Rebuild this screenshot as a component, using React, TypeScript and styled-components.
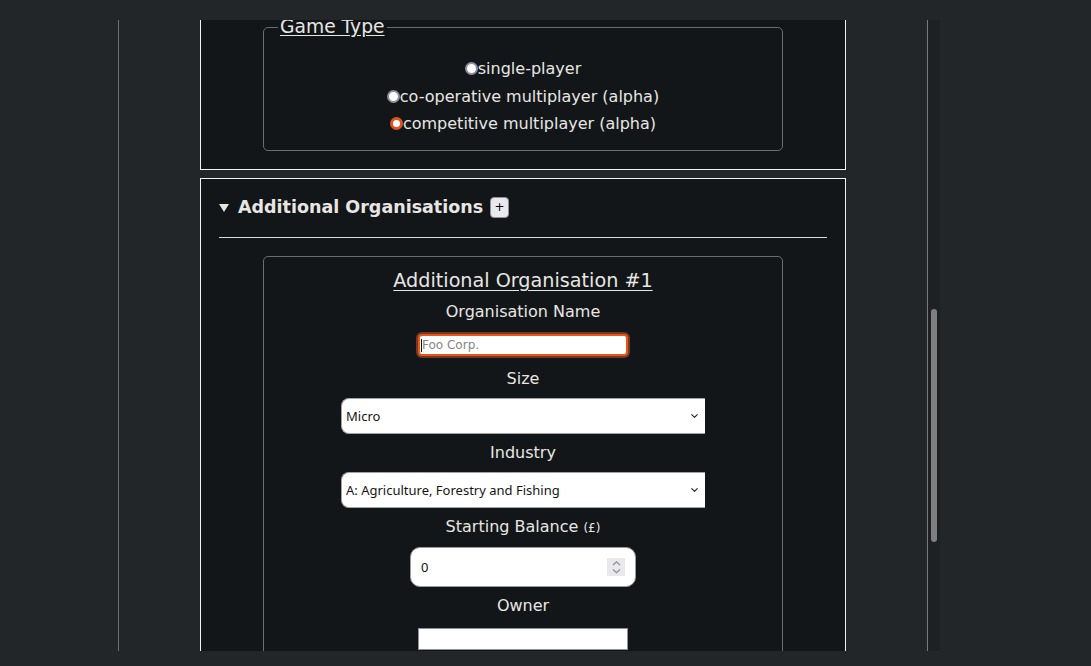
import React, { useLayoutEffect, useRef, useState } from "react";
import styled, { createGlobalStyle, css } from "styled-components";
import { ChevronDown } from "lucide-react";

const GlobalStyle = createGlobalStyle`
  html, body {
    margin: 0;
    padding: 0;
    background: #232629;
    overflow: hidden;
  }
  body {
    font-family: "DejaVu Sans", "Noto Sans", sans-serif;
    color: #e8e6e3;
  }
`;

const Page = styled.div`
  height: 666px;
  box-sizing: border-box;
  padding: 20px 0 15px 118px;
  display: flex;
  align-items: flex-start;
`;

const ScrollArea = styled.div`
  width: 810px;
  height: 631px;
  overflow-y: scroll;
  scrollbar-width: none;
  &::-webkit-scrollbar {
    display: none;
  }
`;

const ScrollTrack = styled.div`
  position: relative;
  width: 12px;
  height: 631px;
  background: #1e2124;
`;

const ScrollThumb = styled.div`
  position: absolute;
  left: 3px;
  width: 6px;
  border-radius: 3px;
  background: #7f7f7f;
`;

const Content = styled.div`
  border-left: 1px solid #6f6f6f;
  border-right: 1px solid #7a7a7a;
  padding: 64px 0 102px;
`;

const Column = styled.div`
  width: 646px;
  margin: 0 auto;
  display: flex;
  flex-direction: column;
  gap: 8px;
`;

const PageTitle = styled.h1`
  margin: 0;
  font-size: 28px;
  line-height: 34px;
  text-align: center;
`;

const Section = styled.details`
  background: #131619;
  border: 1px solid #f2f2f2;
  padding: 17px 18px 18px;
`;

const Summary = styled.summary`
  list-style: none;
  display: flex;
  align-items: center;
  font-size: 17.5px;
  font-weight: bold;
  line-height: 22px;
  cursor: pointer;
  &::-webkit-details-marker {
    display: none;
  }
`;

const Marker = styled.span<{ $open?: boolean }>`
  width: 0;
  height: 0;
  margin: 1px 9px 0 0;
  border-left: 5px solid transparent;
  border-right: 5px solid transparent;
  border-top: 8px solid #e8e6e3;
  ${({ $open }) =>
    !$open &&
    css`
      transform: rotate(-90deg);
    `}
`;

const AddButton = styled.button`
  width: 19px;
  height: 21px;
  margin-left: 7px;
  padding: 0;
  display: flex;
  align-items: center;
  justify-content: center;
  border: 1px solid #8f8f9d;
  border-radius: 4px;
  background: #e9e9ed;
  color: #000;
  font: 12px "DejaVu Sans", sans-serif;
  line-height: 1;
`;

const Divider = styled.hr`
  border: 0;
  border-top: 1px solid #d9d9d9;
  margin: 19px 0 18px;
`;

const Body = styled.div`
  display: flex;
  flex-direction: column;
  align-items: center;
  gap: 18px;
`;

const Card = styled.fieldset`
  width: 520px;
  box-sizing: border-box;
  margin: 0;
  border: 1px solid #6b6e71;
  border-radius: 5px;
  padding: 12px 14px 12px;
  display: flex;
  flex-direction: column;
  align-items: center;
  gap: 9px;
`;

const Legend = styled.legend`
  padding: 0 2px;
  font-size: 18.7px;
  line-height: 22px;
  text-decoration: underline;
  text-underline-offset: 2px;
`;

const CardTitle = styled.div`
  font-size: 19.2px;
  line-height: 24px;
  text-decoration: underline;
  text-underline-offset: 3px;
`;

const Options = styled.div`
  display: flex;
  flex-direction: column;
  gap: 8.5px;
  padding: 9px 0 5px;
  align-self: stretch;
`;

const Option = styled.label`
  display: flex;
  align-items: center;
  justify-content: center;
  font-size: 16px;
  line-height: 19px;
`;

const Radio = styled.input.attrs({ type: "radio" })`
  appearance: none;
  width: 13px;
  height: 13px;
  margin: 0;
  box-sizing: border-box;
  border-radius: 50%;
  border: 2px solid #8f8f9d;
  background: #fff;
  &:checked {
    border: 3.5px solid #e0531f;
  }
`;

const Field = styled.div`
  display: flex;
  flex-direction: column;
  align-items: center;
  gap: 9px;
`;

const FieldLabel = styled.label`
  font-size: 16px;
  line-height: 20px;
`;

const Unit = styled.span`
  font-size: 12px;
`;

const TextInput = styled.input<{ $focused?: boolean }>`
  width: 210px;
  height: 22px;
  box-sizing: border-box;
  margin: 3px 0;
  padding: 0 3px;
  border: 1px solid #8f8f9d;
  background: #fff;
  color: #111;
  font: 12px "DejaVu Sans", sans-serif;
  outline: none;
  &::placeholder {
    color: #858585;
  }
  ${({ $focused }) =>
    $focused &&
    css`
      margin: 3px 0 4px;
      padding: 0 2px;
      border: 2px solid #e4581e;
      border-radius: 4px;
      box-shadow: 0 0 0 2px #7a3820;
      background: linear-gradient(#111, #111) no-repeat 1px 50% / 1px 13px, #fff;
    `}
`;

const SelectWrap = styled.div`
  position: relative;
  width: 364px;
`;

const Select = styled.select`
  appearance: none;
  width: 100%;
  height: 36px;
  box-sizing: border-box;
  padding: 0 24px 0 4px;
  border: 1px solid #a3a3a3;
  border-right: none;
  border-radius: 8px 0 0 8px;
  background: #fff;
  color: #151515;
  font: 13px "Noto Sans", sans-serif;
  outline: none;
`;

const SelectChevron = styled(ChevronDown)`
  position: absolute;
  right: 5px;
  top: 50%;
  transform: translateY(-50%);
  pointer-events: none;
  color: #2a2a2a;
`;

const NumberBox = styled.div`
  width: 226px;
  height: 40px;
  box-sizing: border-box;
  padding: 0 10px;
  display: flex;
  align-items: center;
  border: 1px solid #9b9b9b;
  border-radius: 10px;
  background: #fff;
`;

const NumberInput = styled.input`
  flex: 1;
  min-width: 0;
  padding: 0;
  border: 0;
  outline: none;
  background: transparent;
  color: #111;
  font: 13px "Noto Sans", sans-serif;
  appearance: textfield;
  &::-webkit-inner-spin-button,
  &::-webkit-outer-spin-button {
    appearance: none;
    margin: 0;
  }
`;

const Spinner = styled.span`
  width: 18px;
  height: 18px;
  display: flex;
  background: #e9e9ed;
`;

const SmallButton = styled.button`
  padding: 5px 12px;
  border: 1px solid #8f8f9d;
  border-radius: 4px;
  background: #e9e9ed;
  color: #111;
  font: 13px "DejaVu Sans", sans-serif;
`;

const SubmitRow = styled.div`
  display: flex;
  justify-content: center;
  padding: 10px 0;
`;

const SIZES = ["Micro", "Small", "Medium", "Large"];
const INDUSTRIES = [
  "A: Agriculture, Forestry and Fishing",
  "B: Mining and Quarrying",
  "C: Manufacturing",
  "D: Electricity, Gas, Steam and Air Conditioning Supply",
  "F: Construction",
  "G: Wholesale and Retail Trade",
];
const TURN_LENGTHS = ["1 month", "3 months", "6 months", "1 year"];
const GAME_TYPES = [
  { id: "single", label: "single-player" },
  { id: "coop", label: "co-operative multiplayer (alpha)" },
  { id: "competitive", label: "competitive multiplayer (alpha)" },
];

const SpinIcon = () => (
  <svg width="18" height="18" viewBox="0 0 18 18" fill="none" stroke="#8f8f9d" strokeWidth="1.3">
    <polyline points="6,7 9.5,3.8 13,7" />
    <polyline points="6,11.5 9.5,14.7 13,11.5" />
  </svg>
);

type SelectFieldProps = { id: string; label: string; options: string[] };

const SelectField: React.FC<SelectFieldProps> = ({ id, label, options }) => (
  <Field>
    <FieldLabel htmlFor={id}>{label}</FieldLabel>
    <SelectWrap>
      <Select id={id} defaultValue={options[0]}>
        {options.map((o) => (
          <option key={o}>{o}</option>
        ))}
      </Select>
      <SelectChevron size={11} strokeWidth={2.6} />
    </SelectWrap>
  </Field>
);

type OrgFieldsProps = { prefix: string; focusName?: boolean };

const OrgFields: React.FC<OrgFieldsProps> = ({ prefix, focusName }) => (
  <>
    <Field>
      <FieldLabel htmlFor={`${prefix}-name`}>Organisation Name</FieldLabel>
      <TextInput id={`${prefix}-name`} placeholder="Foo Corp." $focused={focusName} />
    </Field>
    <SelectField id={`${prefix}-size`} label="Size" options={SIZES} />
    <SelectField id={`${prefix}-industry`} label="Industry" options={INDUSTRIES} />
    <Field>
      <FieldLabel htmlFor={`${prefix}-balance`}>
        Starting Balance <Unit>(£)</Unit>
      </FieldLabel>
      <NumberBox>
        <NumberInput id={`${prefix}-balance`} type="number" defaultValue={0} />
        <Spinner>
          <SpinIcon />
        </Spinner>
      </NumberBox>
    </Field>
  </>
);

export default function App() {
  const scrollRef = useRef<HTMLDivElement>(null);
  const orgsRef = useRef<HTMLDetailsElement>(null);
  const [thumb, setThumb] = useState({ top: 0, height: 0 });

  const syncThumb = () => {
    const box = scrollRef.current;
    if (!box) return;
    const track = box.clientHeight;
    setThumb({
      top: (box.scrollTop / box.scrollHeight) * track,
      height: (box.clientHeight / box.scrollHeight) * track,
    });
  };

  // the screenshot is taken part way down the form
  useLayoutEffect(() => {
    const box = scrollRef.current;
    const target = orgsRef.current;
    if (!box || !target) return;
    const offset =
      target.getBoundingClientRect().top - box.getBoundingClientRect().top + box.scrollTop;
    box.scrollTop = offset - 158;
    syncThumb();
  }, []);

  return (
    <>
      <GlobalStyle />
      <Page>
        <ScrollArea ref={scrollRef} onScroll={syncThumb}>
          <Content>
            <Column>
              <PageTitle>New Game</PageTitle>
              <Section open>
                <Summary>
                  <Marker $open />
                  Game Settings
                </Summary>
                <Divider />
                <Body>
                  <Field>
                    <FieldLabel htmlFor="game-name">Game Name</FieldLabel>
                    <TextInput id="game-name" placeholder="My Game" />
                  </Field>
                  <Field>
                    <FieldLabel htmlFor="player-name">Your Name</FieldLabel>
                    <TextInput id="player-name" placeholder="Jane Doe" />
                  </Field>
                  <SelectField id="turn-length" label="Turn Length" options={TURN_LENGTHS} />
                  <Card>
                    <CardTitle>Your Organisation</CardTitle>
                    <OrgFields prefix="main" />
                  </Card>
                  <Card>
                    <Legend>Game Type</Legend>
                    <Options>
                      {GAME_TYPES.map((t) => (
                        <Option key={t.id}>
                          <Radio
                            name="game-type"
                            value={t.id}
                            defaultChecked={t.id === "competitive"}
                          />
                          {t.label}
                        </Option>
                      ))}
                    </Options>
                  </Card>
                </Body>
              </Section>
              <Section open ref={orgsRef}>
                <Summary>
                  <Marker $open />
                  Additional Organisations
                  <AddButton type="button">+</AddButton>
                </Summary>
                <Divider />
                <Body>
                  <Card>
                    <CardTitle>Additional Organisation #1</CardTitle>
                    <OrgFields prefix="org1" focusName />
                    <Field>
                      <FieldLabel htmlFor="org1-owner">Owner</FieldLabel>
                      <TextInput id="org1-owner" />
                    </Field>
                    <SmallButton type="button">Remove</SmallButton>
                  </Card>
                </Body>
              </Section>
              <Section>
                <Summary>
                  <Marker />
                  Advanced Settings
                </Summary>
              </Section>
              <SubmitRow>
                <SmallButton type="submit">Create Game</SmallButton>
              </SubmitRow>
            </Column>
          </Content>
        </ScrollArea>
        <ScrollTrack>
          <ScrollThumb style={{ top: thumb.top, height: thumb.height }} />
        </ScrollTrack>
      </Page>
    </>
  );
}
